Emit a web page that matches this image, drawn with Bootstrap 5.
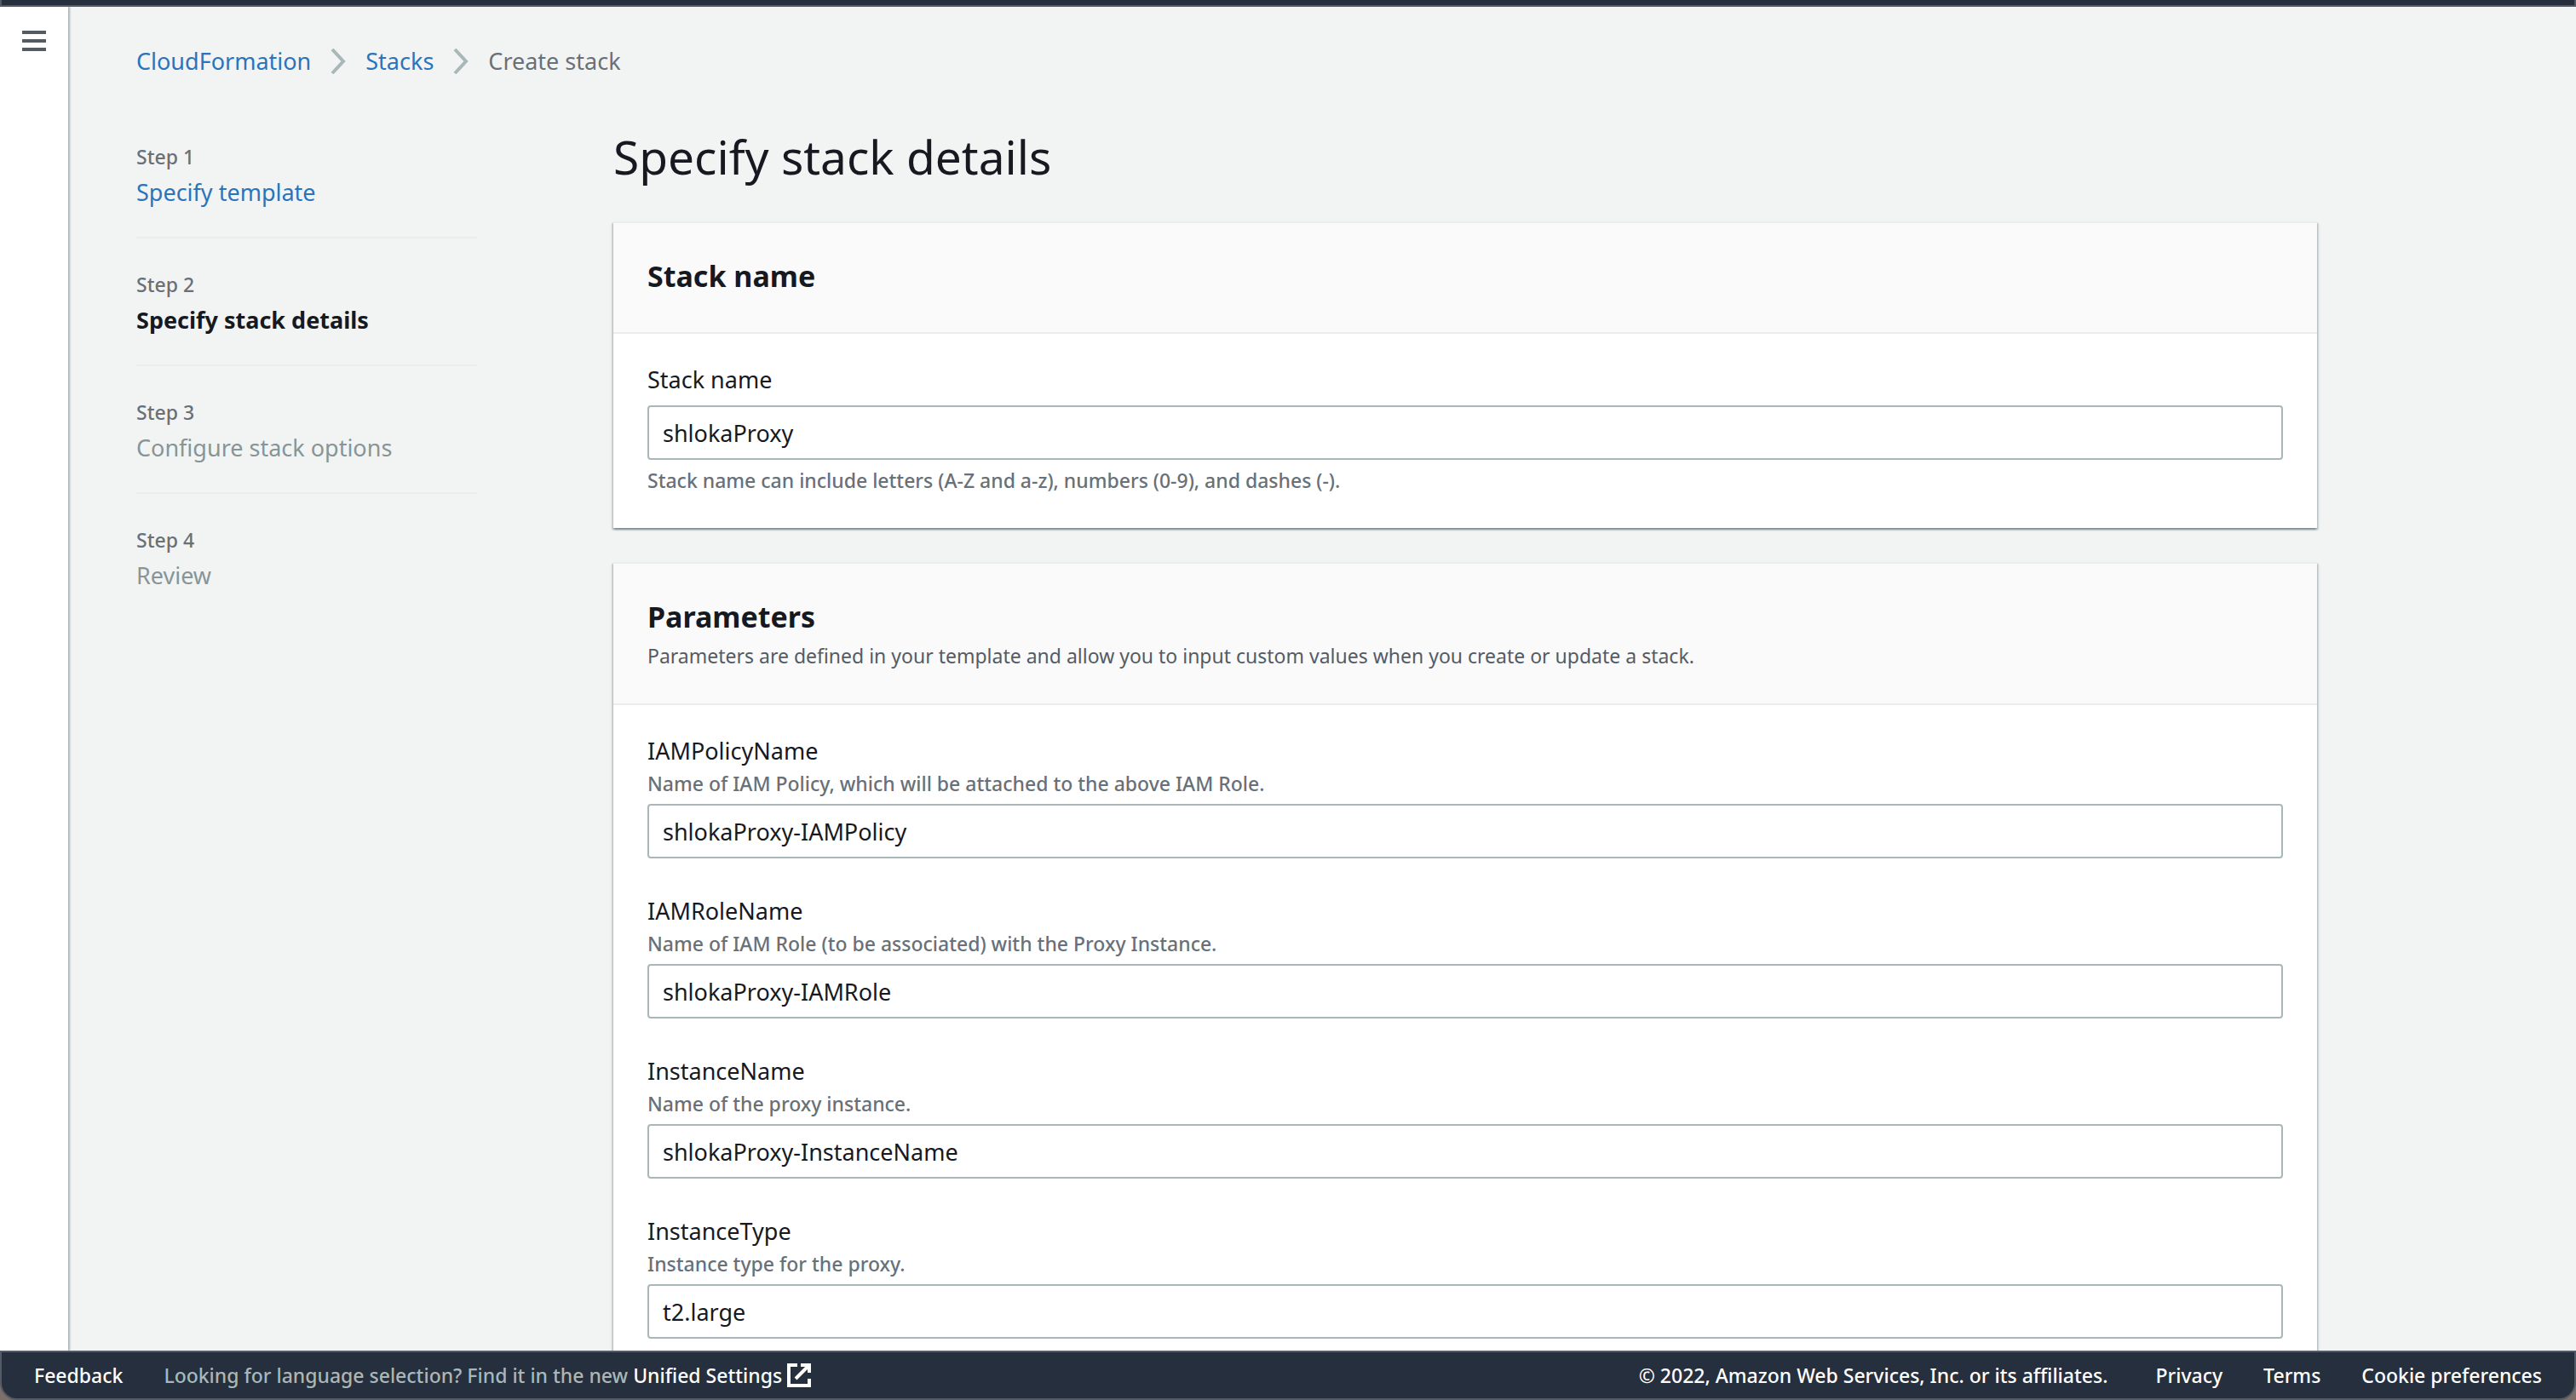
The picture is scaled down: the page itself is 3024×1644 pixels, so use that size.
<!DOCTYPE html>
<html lang="en">
<head>
<meta charset="utf-8">
<meta name="viewport" content="width=device-width, initial-scale=1">
<title>CloudFormation - Create stack</title>
<link href="https://cdn.jsdelivr.net/npm/bootstrap@5.3.0/dist/css/bootstrap.min.css" rel="stylesheet">
<style>
  :root { --ink: #16191f; --muted: #687078; --link: #2b73bb; --rule: #eaeded; --squid: #252f3d; --edge: #545b64; }
  body { font-family: "Noto Sans", "Open Sans", sans-serif; font-size: 27px; line-height: 44px; color: var(--ink); background: #7d706b; }
  a { color: var(--link); text-decoration: none; }
  .topbar { height: 8px; background: var(--squid); border: 2px solid var(--edge); border-top: 0; }
  .rail { width: 80px; box-shadow: 2px 0 2px rgba(0, 28, 36, .3); z-index: 1; }
  .rail-btn { padding: 28px 26px; line-height: 0; color: var(--edge); }
  .page { background: #f2f4f4; }
  .scroller { overflow-y: auto; scrollbar-width: none; padding: 42px 80px; }
  .scroller::-webkit-scrollbar { display: none; }
  .layout { max-width: 2560px; gap: 160px; margin-top: 56px; }
  .crumbs { --bs-breadcrumb-margin-bottom: 0; --bs-breadcrumb-font-size: 27px; gap: 23px; }
  .crumbs li { color: var(--muted); gap: 23px; }
  .steps { width: 400px; padding-top: 16px; }
  .steps li + li { border-top: 2px solid var(--rule); margin-top: 30px; padding-top: 36px; }
  .step-no { font-size: 23px; line-height: 36px; font-weight: 500; margin-bottom: 2px; color: var(--muted); }
  .step-off { color: #879596; }
  h1 { font-size: 55px; line-height: 68px; font-weight: 400; margin-bottom: 42px; }
  .panel { --bs-card-border-width: 0; --bs-card-border-radius: 0; --bs-card-inner-border-radius: 0; border-top: 2px solid var(--rule); margin-bottom: 40px;
    box-shadow: 0 2px 2px rgba(0, 28, 36, .3), 2px 2px 2px rgba(0, 28, 36, .15), -2px 2px 2px rgba(0, 28, 36, .15); }
  .panel .card-header { background: #fafafa; padding: 40px 40px 38px; border-bottom: 2px solid var(--rule); }
  .panel .card-body { padding: 36px 40px 38px; }
  .panel h2 { font-size: 34px; line-height: 44px; font-weight: 700; margin-bottom: 6px; }
  .note { font-size: 23px; line-height: 36px; font-weight: 500; color: var(--muted); }
  .note-dark { color: var(--edge); font-weight: 400; }
  .field + .field { margin-top: 44px; }
  .field label { display: block; line-height: 36px; margin-bottom: 2px; }
  .field .note { margin-bottom: 6px; }
  .field .form-control { height: 64px; padding: 0 16px; border: 2px solid #aab7b8; border-radius: 4px; font-size: 27px; line-height: 40px; color: var(--ink); background: #fff; }
  .field-hinted label { margin-bottom: 12px; }
  .field-hinted .note { margin: 6px 0 0; }
  .foot { background: var(--squid); border: 2px solid var(--edge); border-radius: 0 0 20px 20px; padding: 0 38px; font-size: 23px; line-height: 54px; font-weight: 500; color: #aab7b8; }
  .foot a, .foot button, .foot .legal { color: #fff; }
  .foot button { font-size: 23px; line-height: 54px; font-weight: 500; }
  .foot-start, .foot-end { gap: 48px; }
  .foot-end .legal { margin-right: 8px; }
  .foot-link { gap: 6px; }
</style>
</head>
<body class="vh-100 overflow-hidden d-flex flex-column">
  <header class="topbar flex-shrink-0"></header>
  <div class="page d-flex flex-grow-1 overflow-hidden">
    <aside class="rail bg-white flex-shrink-0">
      <button type="button" class="btn border-0 rounded-0 rail-btn" aria-label="Open navigation">
        <svg width="28" height="24" viewBox="0 0 28 24" fill="currentColor" aria-hidden="true"><path d="M0 0h28v4H0zM0 10h28v4H0zM0 20h28v4H0z"/></svg>
      </button>
    </aside>
    <div class="scroller flex-grow-1">
      <nav aria-label="Breadcrumb">
        <ol class="breadcrumb crumbs">
          <li class="d-flex align-items-center"><a href="#">CloudFormation</a>
            <svg width="18" height="30" viewBox="0 0 18 30" fill="none" stroke="#aab7b8" stroke-width="4" aria-hidden="true"><path d="M2 1l13 14L2 29"/></svg></li>
          <li class="d-flex align-items-center"><a href="#">Stacks</a>
            <svg width="18" height="30" viewBox="0 0 18 30" fill="none" stroke="#aab7b8" stroke-width="4" aria-hidden="true"><path d="M2 1l13 14L2 29"/></svg></li>
          <li aria-current="page">Create stack</li>
        </ol>
      </nav>
      <div class="layout d-flex align-items-start">
        <nav class="flex-shrink-0" aria-label="Steps">
          <ol class="steps list-unstyled mb-0">
            <li><div class="step-no">Step 1</div><a class="d-block" href="#">Specify template</a></li>
            <li><div class="step-no">Step 2</div><div class="fw-bold" aria-current="step">Specify stack details</div></li>
            <li><div class="step-no">Step 3</div><div class="step-off">Configure stack options</div></li>
            <li><div class="step-no">Step 4</div><div class="step-off">Review</div></li>
          </ol>
        </nav>
        <main class="flex-grow-1">
          <h1>Specify stack details</h1>
          <section class="card panel">
            <div class="card-header"><h2>Stack name</h2></div>
            <div class="card-body">
              <div class="field field-hinted">
                <label for="stack-name">Stack name</label>
                <input id="stack-name" class="form-control" type="text" value="shlokaProxy" aria-describedby="stack-hint">
                <div id="stack-hint" class="note">Stack name can include letters (A-Z and a-z), numbers (0-9), and dashes (-).</div>
              </div>
            </div>
          </section>
          <section class="card panel">
            <div class="card-header">
              <h2>Parameters</h2>
              <div class="note note-dark">Parameters are defined in your template and allow you to input custom values when you create or update a stack.</div>
            </div>
            <div class="card-body">
              <div class="field">
                <label for="policy">IAMPolicyName</label>
                <div id="policy-note" class="note">Name of IAM Policy, which will be attached to the above IAM Role.</div>
                <input id="policy" class="form-control" type="text" value="shlokaProxy-IAMPolicy" aria-describedby="policy-note">
              </div>
              <div class="field">
                <label for="role">IAMRoleName</label>
                <div id="role-note" class="note">Name of IAM Role (to be associated) with the Proxy Instance.</div>
                <input id="role" class="form-control" type="text" value="shlokaProxy-IAMRole" aria-describedby="role-note">
              </div>
              <div class="field">
                <label for="instance">InstanceName</label>
                <div id="instance-note" class="note">Name of the proxy instance.</div>
                <input id="instance" class="form-control" type="text" value="shlokaProxy-InstanceName" aria-describedby="instance-note">
              </div>
              <div class="field">
                <label for="type">InstanceType</label>
                <div id="type-note" class="note">Instance type for the proxy.</div>
                <input id="type" class="form-control" type="text" value="t2.large" aria-describedby="type-note">
              </div>
            </div>
          </section>
        </main>
      </div>
    </div>
  </div>
  <footer class="foot flex-shrink-0 d-flex justify-content-between">
    <div class="foot-start d-flex">
      <button type="button" class="btn border-0 p-0">Feedback</button>
      <div class="foot-link d-flex align-items-center">
        <span>Looking for language selection? Find it in the new <a href="#">Unified Settings</a></span>
        <svg width="28" height="28" viewBox="0 0 28 28" fill="none" stroke="#fff" stroke-width="4" aria-hidden="true"><path d="M12 2H2v24h24V18M16 2h10v9M25 3L10 18"/></svg>
      </div>
    </div>
    <div class="foot-end d-flex">
      <span class="legal">© 2022, Amazon Web Services, Inc. or its affiliates.</span>
      <a href="#">Privacy</a>
      <a href="#">Terms</a>
      <a href="#">Cookie preferences</a>
    </div>
  </footer>
<script src="https://cdn.jsdelivr.net/npm/bootstrap@5.3.0/dist/js/bootstrap.bundle.min.js"></script>
</body>
</html>
